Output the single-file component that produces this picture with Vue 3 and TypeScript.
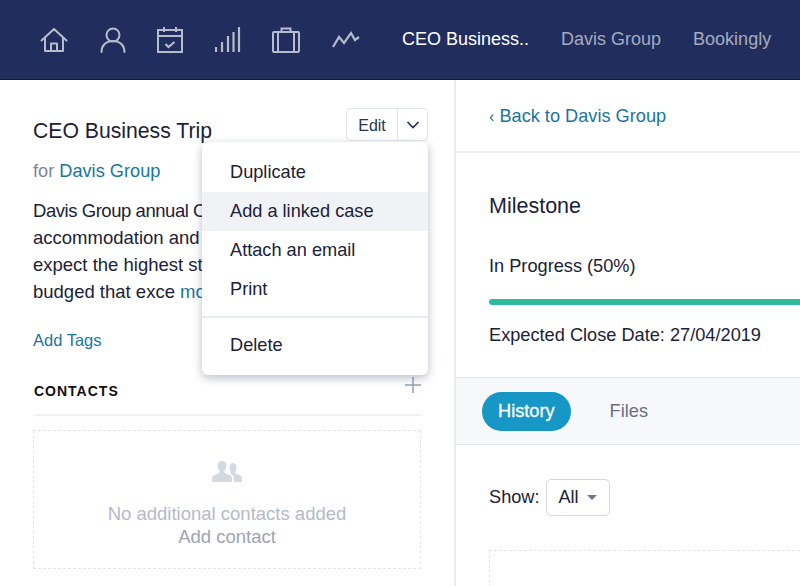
<script setup lang="ts">
const menuTop: string[] = ['Duplicate', 'Add a linked case', 'Attach an email', 'Print']
</script>

<template>
  <div class="page">
    <header class="topbar">
      <nav class="icons">
        <svg width="28" height="26" viewBox="0 0 28 26" fill="none" stroke="#b4bccd" stroke-width="2"><path d="M1.500 13.500 14 2l12.500 11.500M5 11v13h18V11M11 24v-7.500h6V24" stroke-linejoin="round" stroke-linecap="round"/></svg>
        <svg width="26" height="26" viewBox="0 0 26 26" fill="none" stroke="#b4bccd" stroke-width="2"><circle cx="13" cy="8" r="6.500"/><path d="M1.500 25c0-6.500 4.500-11 11.500-11s11.500 4.500 11.500 11" stroke-linecap="round"/></svg>
        <svg width="26" height="26" viewBox="0 0 26 26" fill="none" stroke="#b4bccd" stroke-width="2"><rect x="1" y="3" width="24" height="22"/><path d="M1 9h24M7 0v5M19 0v5" /><path d="m8.500 17 3 3 6-5" stroke-width="2.200"/></svg>
        <svg width="26" height="26" viewBox="0 0 26 26" fill="none" stroke="#b4bccd" stroke-width="2.200"><path d="M1 25v-5M7 25V15M13 25V9M18.500 25V5M24 25V0"/></svg>
        <svg width="28" height="26" viewBox="0 0 28 26" fill="none" stroke="#b4bccd" stroke-width="2"><rect x="1" y="5" width="26" height="20" rx="1"/><path d="M9.500 5V1.500h9V5M6 5v20M22 5v20"/></svg>
        <svg width="28" height="20" viewBox="0 0 28 20" fill="none" stroke="#b4bccd" stroke-width="2.200"><path d="m1 17 6-10 5 6 7-10 4 7 4-3" stroke-linejoin="miter"/></svg>
      </nav>
      <a class="crumb active">CEO Business..</a>
      <a class="crumb">Davis Group</a>
      <a class="crumb">Bookingly</a>
    </header>

    <main class="body">
      <section class="left">
        <div class="title-row">
          <h1>CEO Business Trip</h1>
          <div class="split">
            <span class="edit">Edit</span>
            <span class="caret">
              <svg width="14" height="8" viewBox="0 0 14 8" fill="none" stroke="#1f2c56" stroke-width="1.600"><path d="m1.500 1 5.500 5.500L12.500 1"/></svg>
            </span>
          </div>
        </div>
        <p class="for">for <a class="link">Davis Group</a></p>
        <p class="desc">
          <span class="tight">Davis Group annual CEO trip</span><br />
          accommodation and<br />
          expect the highest standard<br />
          budged that exce <a class="link">more</a>
        </p>
        <a class="link tags">Add Tags</a>
        <div class="section-head">
          <span>CONTACTS</span>
          <svg width="16" height="16" viewBox="0 0 16 16" stroke="#97a1b6" stroke-width="1.500"><path d="M8 0v16M0 8h16"/></svg>
        </div>
        <div class="empty">
          <svg width="30" height="21" viewBox="0 0 30 21" fill="#d3d9e3">
            <path d="M0 21v-4c0-2 2-3 5-4 2-.7 3-1.500 3-2.500-1.500-1.500-2.500-3.500-2.500-6C5.500 1.500 7.500 0 10 0s4.500 1.500 4.500 4.500c0 2.500-1 4.500-2.500 6 0 1 1 1.800 3 2.500 3 1 5 2 5 4v4z"/>
            <path d="M22 21v-4c0-1.800-1.500-3-3.500-4 .5-.5.800-1.500.5-2-1-1.300-1.500-3-1.500-5C17.500 3 19.300 2 21 2s3.500 1 3.500 4c0 2-.5 3.700-1.500 5 0 1 .8 1.500 2.500 2.200 2.500 1 4.500 1.800 4.500 3.800v4z"/>
          </svg>
          <p class="none">No additional contacts added</p>
          <p class="add">Add contact</p>
        </div>

        <div class="menu">
          <ul>
            <li v-for="(item, i) in menuTop" :key="item" :class="{ hover: i === 1 }">{{ item }}</li>
          </ul>
          <hr />
          <ul>
            <li>Delete</li>
          </ul>
        </div>
      </section>

      <section class="right">
        <div class="back"><a class="link"><span class="chev">‹</span> Back to Davis Group</a></div>
        <div class="milestone">
          <h2>Milestone</h2>
          <p class="progress-label">In Progress (50%)</p>
          <div class="bar"></div>
          <p class="close-date">Expected Close Date: 27/04/2019</p>
        </div>
        <div class="tabs">
          <span class="tab on">History</span>
          <span class="tab">Files</span>
        </div>
        <div class="filter">
          <span>Show:</span>
          <span class="select"><span class="all">All</span> <i class="tri"></i></span>
        </div>
        <div class="history-box"></div>
      </section>
    </main>
  </div>
</template>

<style>
html, body { margin: 0; overflow: hidden; }
</style>

<style scoped>
.page {
  width: 800px;
  height: 586px;
  overflow: hidden;
  font-family: "Liberation Sans", Arial, sans-serif;
  color: #1b2238;
  background: #fff;
  font-size: 18.200px;
}
.topbar {
  height: 79px;
  background: #212e5d;
  border-bottom: 1px solid #141c3c;
  display: flex;
  align-items: center;
  padding-left: 40px;
}
.icons { display: flex; align-items: center; width: 362px; gap: 31.500px; flex: none; }
.crumb { color: #a3abbd; font-size: 18px; margin-right: 32px; white-space: nowrap; flex: none; }
.crumb.active { color: #fff; }
.body { display: flex; height: 506px; }
.left {
  position: relative;
  width: 388px;
  padding: 0 33px;
  border-right: 2px solid #e8ebf1;
  flex: none;
}
.title-row { display: flex; justify-content: space-between; margin-top: 28px; height: 35px; align-items: flex-start; }
h1 { font-size: 21.200px; font-weight: 400; margin: 11px 0 0; line-height: 24px; white-space: nowrap; }
.split {
  margin-left: auto;
  margin-right: -7px;
  display: flex;
  height: 33px;
  border: 1px solid #e3e6ed;
  border-radius: 4px;
  box-sizing: border-box;
}
.edit { width: 50px; text-align: center; font-size: 16px; line-height: 33px; color: #2a3454; border-right: 1px solid #e3e6ed; }
.caret { width: 29px; display: flex; align-items: center; justify-content: center; }
.link { color: #19759f; }
.for { margin: 17px 0 0; color: #7e8597; line-height: 22px; }
.desc { margin: 15px 0 0; line-height: 27px; width: 300px; white-space: nowrap; font-size: 18.500px; }
.tight { letter-spacing: -0.450px; }
.tags { display: block; margin-top: 25px; font-size: 16.500px; line-height: 20px; }
.section-head {
  margin-top: 26px;
  height: 40px;
  box-sizing: border-box;
  display: flex;
  justify-content: space-between;
  border-bottom: 2px solid #eef0f5;
  font-size: 14px;
  font-weight: 700;
  letter-spacing: 1px;
  color: #111;
}
.section-head span { margin-top: 7px; line-height: 16px; margin-left: 1px; }
.section-head svg { margin-top: 1px; }
.empty {
  margin-top: 14px;
  height: 139px;
  box-sizing: border-box;
  border: 1px dashed #e2e6ee;
  display: flex;
  flex-direction: column;
  align-items: center;
  padding-top: 30px;
}
.empty p { margin: 0; line-height: 23px; font-size: 18.500px; }
.none { color: #b5bac8; margin-top: 20px !important; }
.add { color: #9da3b4; }
.menu {
  position: absolute;
  left: 202px;
  top: 62px;
  width: 226px;
  height: 233px;
  background: #fff;
  border-radius: 6px;
  box-shadow: 0 3px 10px rgba(60, 72, 100, 0.35);
}
.menu ul { list-style: none; margin: 0; padding: 0; }
.menu ul:first-child { padding-top: 11px; }
.menu li { height: 39px; line-height: 39px; padding-left: 28px; }
.menu li.hover { background: #f0f2f5; }
.menu hr { border: 0; border-top: 2px solid #e8ebf0; margin: 7px 0 8px; }
.right { flex: 1; min-width: 0; }
.back {
  height: 73px;
  box-sizing: border-box;
  padding: 24px 0 0 33px;
  line-height: 24px;
  border-bottom: 2px solid #eef0f5;
}
.chev { font-size: 16px; }
.milestone { height: 224px; box-sizing: border-box; padding: 41px 0 0 33px; position: relative; }
h2 { font-weight: 400; font-size: 21.500px; line-height: 24px; margin: 0; }
.progress-label { margin: 37px 0 0; line-height: 22px; }
.bar { height: 6px; background: #30bc9c; margin-top: 22px; border-radius: 3px 0 0 3px; }
.close-date { margin: 18px 0 0; line-height: 24px; }
.tabs {
  height: 68px;
  box-sizing: border-box;
  background: #f7f8fa;
  border-top: 1px solid #e1e5ed;
  border-bottom: 1px solid #e1e5ed;
  display: flex;
  align-items: center;
  padding-left: 26px;
  gap: 25px;
}
.tab { color: #6a7186; padding: 0 14px; line-height: 39px; }
.tab.on { background: #1697c6; color: #fff; font-weight: 400; -webkit-text-stroke: 0.300px #fff; border-radius: 20px; padding: 0 16px; }
.filter { display: flex; align-items: center; gap: 6px; margin: 34px 0 0 33px; height: 37px; }
.select {
  width: 64px;
  height: 37px;
  box-sizing: border-box;
  border: 1px solid #d2d8e3;
  border-radius: 5px;
  display: flex;
  align-items: center;
  justify-content: center;
  gap: 8px;
}
.tri { width: 0; height: 0; border: 5px solid transparent; border-top: 5px solid #6e7690; border-bottom: 0; }
.history-box { margin: 34px 0 0 33px; height: 60px; border: 1px dashed #e2e6ee; border-right: 0; }
</style>
